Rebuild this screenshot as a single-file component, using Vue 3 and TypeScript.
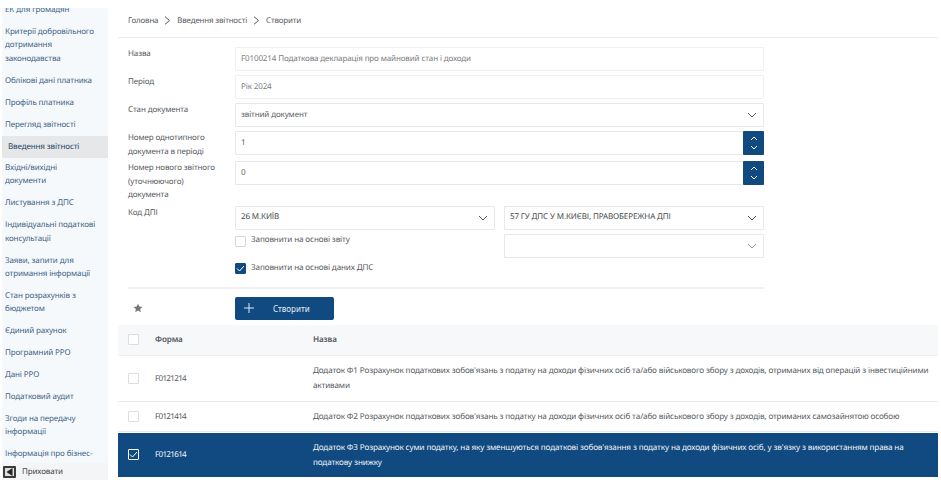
<script setup lang="ts">
interface Row { code: string; name: string; checked?: boolean }
const menu: { t: string; active?: boolean }[] = [
  { t: 'ЕК для громадян' },
  { t: 'Критерії добровільного дотримання законодавства' },
  { t: 'Облікові дані платника' },
  { t: 'Профіль платника' },
  { t: 'Перегляд звітності' },
  { t: 'Введення звітності', active: true },
  { t: 'Вхідні/вихідні документи' },
  { t: 'Листування з ДПС' },
  { t: 'Індивідуальні податкові консультації' },
  { t: 'Заяви, запити для отримання інформації' },
  { t: 'Стан розрахунків з бюджетом' },
  { t: 'Єдиний рахунок' },
  { t: 'Програмний РРО' },
  { t: 'Дані РРО' },
  { t: 'Податковий аудит' },
  { t: 'Згоди на передачу інформації' },
  { t: 'Інформація про бізнес-' },
]
const rows: Row[] = [
  { code: 'F0121214', name: "Додаток Ф1 Розрахунок податкових зобов'язань з податку на доходи фізичних осіб та/або військового збору з доходів, отриманих від операцій з інвестиційними активами" },
  { code: 'F0121414', name: "Додаток Ф2 Розрахунок податкових зобов'язань з податку на доходи фізичних осіб та/або військового збору з доходів, отриманих самозайнятою особою" },
  { code: 'F0121614', name: "Додаток Ф3 Розрахунок суми податку, на яку зменшуються податкові зобов'язання з податку на доходи фізичних осіб, у зв'язку з використанням права на податкову знижку", checked: true },
]
</script>

<template>
  <div class="page">
    <aside class="side">
      <div class="side-scroll">
        <a v-for="m in menu" :key="m.t" class="item" :class="{ active: m.active }">{{ m.t }}</a>
      </div>
      <div class="hide-bar">
        <span class="hide-ico"><svg width="7" height="8" viewBox="0 0 7 8"><path d="M6.500 0V8L0.500 4Z" fill="#222" /></svg></span>
        <span>Приховати</span>
      </div>
    </aside>
    <main class="main">
      <nav class="crumbs">
        <span>Головна</span>
        <svg width="7" height="9" viewBox="0 0 7 9"><path d="M1 .7L5.500 4.500 1 8.300" fill="none" stroke="#555" stroke-width="1" /></svg>
        <span>Введення звітності</span>
        <svg width="7" height="9" viewBox="0 0 7 9"><path d="M1 .7L5.500 4.500 1 8.300" fill="none" stroke="#555" stroke-width="1" /></svg>
        <span>Створити</span>
      </nav>
      <form class="form" @submit.prevent>
        <div class="frow">
          <label>Назва</label>
          <div class="field ro">F0100214 Податкова декларація про майновий стан і доходи</div>
        </div>
        <div class="frow">
          <label>Період</label>
          <div class="field ro">Рік 2024</div>
        </div>
        <div class="frow">
          <label>Стан документа</label>
          <div class="field sel">звітний документ
            <svg class="chev" width="10" height="6" viewBox="0 0 10 6"><path d="M1 1l4 4 4-4" fill="none" stroke="#555" stroke-width="1" /></svg>
          </div>
        </div>
        <div class="frow r4">
          <label>Номер однотипного<br>документа в періоді</label>
          <div class="field num">1
            <span class="spin">
              <svg width="8" height="5" viewBox="0 0 8 5"><path d="M1 4l3-3 3 3" fill="none" stroke="#fff" stroke-width="1" /></svg>
              <svg width="8" height="5" viewBox="0 0 8 5"><path d="M1 1l3 3 3-3" fill="none" stroke="#fff" stroke-width="1" /></svg>
            </span>
          </div>
        </div>
        <div class="frow r5">
          <label>Номер нового звітного<br>(уточнюючого)<br>документа</label>
          <div class="field num">0
            <span class="spin">
              <svg width="8" height="5" viewBox="0 0 8 5"><path d="M1 4l3-3 3 3" fill="none" stroke="#fff" stroke-width="1" /></svg>
              <svg width="8" height="5" viewBox="0 0 8 5"><path d="M1 1l3 3 3-3" fill="none" stroke="#fff" stroke-width="1" /></svg>
            </span>
          </div>
        </div>
        <div class="frow code">
          <label>Код ДПІ</label>
          <div class="code-grid">
            <div class="code-col">
              <div class="field sel dark">26 М.КИЇВ
                <svg class="chev" width="10" height="6" viewBox="0 0 10 6"><path d="M1 1l4 4 4-4" fill="none" stroke="#555" stroke-width="1" /></svg>
              </div>
              <div class="check c1"><span class="box"></span>Заповнити на основі звіту</div>
              <div class="check c2">
                <span class="box on"><svg width="9" height="7" viewBox="0 0 9 7"><path d="M1 3.500l2.500 2.500L8 1" fill="none" stroke="#fff" stroke-width="1" /></svg></span>
                Заповнити на основі даних ДПС
              </div>
            </div>
            <div class="code-col gap">
              <div class="field sel dark">57 ГУ ДПС У М.КИЄВІ, ПРАВОБЕРЕЖНА ДПІ
                <svg class="chev" width="10" height="6" viewBox="0 0 10 6"><path d="M1 1l4 4 4-4" fill="none" stroke="#555" stroke-width="1" /></svg>
              </div>
              <div class="field sel">
                <svg class="chev" width="10" height="6" viewBox="0 0 10 6"><path d="M1 1l4 4 4-4" fill="none" stroke="#999" stroke-width="1" /></svg>
              </div>
            </div>
          </div>
        </div>
      </form>
      <div class="actions">
        <div class="star-cell">
          <svg width="10" height="10" viewBox="0 0 24 24"><path d="M12 1.500l3.200 7 7.600.8-5.700 5.100 1.600 7.500L12 18l-6.700 3.900 1.600-7.500L1.200 9.300l7.600-.8z" fill="#777" /></svg>
        </div>
        <button class="create" type="button">
          <svg width="10" height="10" viewBox="0 0 10 10"><path d="M5 0v10M0 5h10" stroke="#dfe8f0" stroke-width="1" /></svg>
          <span>Створити</span>
        </button>
      </div>
      <div class="table">
        <div class="tr head">
          <div class="c-check"><span class="tbox"></span></div>
          <div class="c-code">Форма</div>
          <div class="c-name">Назва</div>
        </div>
        <div v-for="r in rows" :key="r.code" class="tr" :class="{ sel: r.checked }">
          <div class="c-check">
            <span class="tbox" :class="{ on: r.checked }">
              <svg v-if="r.checked" width="9" height="7" viewBox="0 0 9 7"><path d="M1 3.500l2.500 2.500L8 1" fill="none" stroke="#fff" stroke-width="1" /></svg>
            </span>
          </div>
          <div class="c-code mono">{{ r.code }}</div>
          <div class="c-name">{{ r.name }}</div>
        </div>
      </div>
    </main>
  </div>
</template>

<style>
html, body { margin: 0; background: #fff; overflow: hidden; }
</style>

<style scoped>
.page {
  width: 941px;
  height: 480px;
  overflow: hidden;
  display: flex;
  font-family: "Noto Sans", sans-serif;
  text-rendering: geometricPrecision;
  font-size: 8px;
  letter-spacing: -0.120px;
  color: #55595e;
  background: #fff;
}
.side {
  width: 106px;
  height: 472px;
  margin: 8px 0 0 2px;
  flex: none;
  background: #f6f9fc;
  display: flex;
  flex-direction: column;
  overflow: hidden;
  position: relative;
}
.side-scroll { flex: 1; overflow: hidden; margin-top: -5px; }
.item {
  display: block;
  padding: 0 9.500px 8.700px 3px;
  line-height: 13.300px;
  color: #3c6286;
}
.item.active {
  background: #e6e7e8;
  color: #1f4468;
  padding: 4px 3px 4px 6px;
  margin: -4px 0 3.500px 0;
  line-height: 14px;
}
.hide-bar {
  position: absolute;
  left: 0; right: 0; bottom: 0;
  height: 17px;
  background: #f3f5f7;
  display: flex;
  align-items: center;
  gap: 6px;
  padding-left: 1px;
  color: #444;
}
.hide-ico {
  width: 13px; height: 12px;
  box-sizing: border-box;
  border: 2px solid #3a3a3a;
  border-radius: 1px;
  background: #ddd;
  display: flex;
  align-items: center;
  justify-content: center;
}
.main { margin-left: 10px; width: 820px; flex: none; }
.crumbs {
  box-sizing: border-box;
  border-bottom: 1px solid #e9ecef;
  padding: 15px 0 11px 10px;
  display: flex;
  align-items: center;
  gap: 6px;
  height: 38px;
  font-size: 7.900px;
  letter-spacing: -0.150px;
}
.form { padding: 9px 0 0 10px; width: 636px; }
.frow {
  display: grid;
  grid-template-columns: 107px 529px;
  margin-bottom: 4px;
}
.frow.r4 { margin-bottom: 3px; }
.frow.r5 { margin-bottom: 4px; }
label { line-height: 13.500px; }
.field {
  height: 24px;
  box-sizing: border-box;
  border: 1px solid #e6e8ea;
  border-radius: 1px;
  padding: 0 5px 2px;
  display: flex;
  align-items: center;
  position: relative;
  background: #fff;
  color: #5a5e63;
}
.field.ro { color: #777b80; border-color: #eef0f1; }
.chev { position: absolute; right: 6px; top: 8px; }
.spin {
  position: absolute;
  right: -1px;
  top: -1px;
  width: 21px;
  height: 24px;
  background: #104a80;
  border-radius: 1px;
  display: flex;
  flex-direction: column;
  align-items: center;
  justify-content: center;
  gap: 4px;
}
.code-grid { display: grid; grid-template-columns: 260px 260px; column-gap: 9px; }
.code-col { display: flex; flex-direction: column; }
.code-col.gap { gap: 4px; }
.field.dark { color: #45494d; }
.check { display: flex; align-items: center; gap: 5px; color: #55595e; font-size: 8.100px; }
.check.c1 { margin-top: 4px; height: 16px; align-items: flex-start; line-height: 12px; }
.check.c2 { margin-top: 11px; height: 14px; }
.box {
  width: 11px; height: 11px;
  box-sizing: border-box;
  border: 1px solid #d5d8da;
  border-radius: 1px;
  display: flex;
  align-items: center;
  justify-content: center;
  flex: none;
  margin-top: 2px;
}
.box.on { background: #104a80; border-color: #104a80; }
.actions {
  margin: 12px 0 0 10px;
  width: 636px;
  border-top: 2px solid #f1f2f3;
  padding-top: 8px;
  display: grid;
  grid-template-columns: 107px auto;
  align-items: center;
  justify-content: start;
}
.star-cell { padding-left: 5px; display: flex; }
.create {
  width: 99px;
  height: 23px;
  background: #104a80;
  border: 0;
  border-radius: 2px;
  color: #e8eef4;
  font: inherit;
  letter-spacing: 0;
  display: flex;
  align-items: center;
  gap: 19px;
  padding: 0 0 0 9px;
}
.table { margin-top: 5px; font-size: 8.100px; letter-spacing: -0.130px; }
.tr { display: flex; align-items: center; box-sizing: border-box; border-bottom: 1px solid #e8eaec; min-height: 30px; }
.tr.head { background: #f6f8fa; height: 31px; font-weight: 600; color: #55595e; border-bottom-color: #eef0f2; }
.tr:nth-child(2) { height: 46px; }
.tr.sel { background: #104a80; color: #f2f5f8; height: 44px; border-bottom: 0; margin-top: 1px; }
.c-check { width: 37px; padding-left: 10px; box-sizing: border-box; display: flex; flex: none; }
.c-code { width: 158px; flex: none; }
.c-code.mono { letter-spacing: -0.700px; }
.c-name { flex: 1; line-height: 15px; padding-right: 8px; }
.tbox {
  width: 11px; height: 11px;
  box-sizing: border-box;
  border: 1px solid #dcdfe1;
  border-radius: 1px;
  background: #fff;
  display: flex;
  align-items: center;
  justify-content: center;
}
.tbox.on { background: transparent; border-color: #fff; }
</style>
